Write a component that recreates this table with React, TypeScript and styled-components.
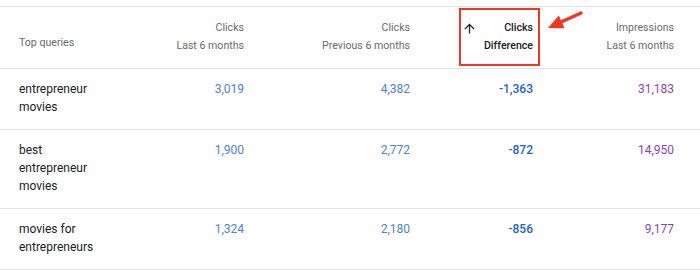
import * as React from "react";
import styled, { createGlobalStyle } from "styled-components";

type Row = {
  query: string;
  clicks: string;
  previous: string;
  difference: string;
  impressions: string;
};

const rows: Array<Row> = [
  { query: "entrepreneur movies", clicks: "3,019", previous: "4,382", difference: "-1,363", impressions: "31,183" },
  { query: "best entrepreneur movies", clicks: "1,900", previous: "2,772", difference: "-872", impressions: "14,950" },
  { query: "movies for entrepreneurs", clicks: "1,324", previous: "2,180", difference: "-856", impressions: "9,177" },
];

const GlobalStyle = createGlobalStyle`
  body {
    margin: 0;
    background: #fff;
    font-family: Roboto, "Liberation Sans", sans-serif;
  }
`;

export default function App() {
  return (
    <>
      <GlobalStyle />
      <Page>
        <Table>
          <HeaderRow>
            <QueryHead>Top queries</QueryHead>
            <HeadCell>
              <span>Clicks</span>
              <span>Last 6 months</span>
            </HeadCell>
            <HeadCell>
              <span>Clicks</span>
              <span>Previous 6 months</span>
            </HeadCell>
            <HeadCell $active>
              <SortLine>
                <svg width="15" height="15" viewBox="0 0 24 24">
                  <path d="M4 12l1.41 1.41L11 7.83V20h2V7.83l5.58 5.59L20 12l-8-8-8 8z" fill="#202124" />
                </svg>
                <span>Clicks</span>
              </SortLine>
              <span>Difference</span>
              <Highlight />
              <Pointer width="40" height="22" viewBox="0 0 40 22">
                <line x1="35" y1="3" x2="13" y2="13" stroke="#f2361f" strokeWidth="3.4" strokeLinecap="round" />
                <polygon points="2,18 18.5,18.2 12.8,5.5" fill="#f2361f" />
              </Pointer>
            </HeadCell>
            <HeadCell>
              <span>Impressions</span>
              <span>Last 6 months</span>
            </HeadCell>
          </HeaderRow>
          {rows.map((row, index) => (
            <BodyRow key={`row_${index}`}>
              <Query>{row.query}</Query>
              <Num $color="#4a80e8">{row.clicks}</Num>
              <Num $color="#4a80e8">{row.previous}</Num>
              <Num $color="#1a62d6" $bold>{row.difference}</Num>
              <Num $color="#8e3fb8">{row.impressions}</Num>
            </BodyRow>
          ))}
        </Table>
      </Page>
    </>
  );
}

const Page = styled.div`
  width: 700px;
  height: 270px;
  padding-top: 6px;
  box-sizing: border-box;
  overflow: hidden;
`;

const Table = styled.div`
  border-top: 1px solid #e3e3e3;
`;

const Grid = styled.div`
  display: grid;
  grid-template-columns: 85px 140px 166px 123px 141px;
  padding: 0 26px 0 19px;
  border-bottom: 1px solid #e3e3e3;
  font-size: 12px;
  line-height: 18px;
`;

const HeaderRow = styled(Grid)`
  padding-top: 12px;
  padding-bottom: 13px;
  font-size: 10.6px;
  color: #6a6a6a;
`;

const QueryHead = styled.div`
  align-self: end;
  padding-bottom: 3px;
`;

const HeadCell = styled.div<{ $active?: boolean }>`
  position: relative;
  display: flex;
  flex-direction: column;
  align-items: flex-end;
  text-align: right;
  color: ${(p) => (p.$active ? "#202124" : "#6a6a6a")};
  font-weight: ${(p) => (p.$active ? 500 : 400)};
`;

const SortLine = styled.div`
  align-self: stretch;
  display: flex;
  justify-content: space-between;
  align-items: center;
  padding-left: 52px;
  svg {
    display: block;
  }
`;

const Highlight = styled.div`
  position: absolute;
  top: -11px;
  bottom: -11px;
  left: 49px;
  right: -7px;
  border: 2.5px solid #f2361f;
`;

const Pointer = styled.svg`
  position: absolute;
  left: 136px;
  top: -9px;
`;

const BodyRow = styled(Grid)`
  padding-top: 11px;
  padding-bottom: 13px;
`;

const Query = styled.div`
  color: #202124;
`;

const Num = styled.div<{ $color: string; $bold?: boolean }>`
  text-align: right;
  color: ${(p) => p.$color};
  font-weight: ${(p) => (p.$bold ? 500 : 400)};
`;
